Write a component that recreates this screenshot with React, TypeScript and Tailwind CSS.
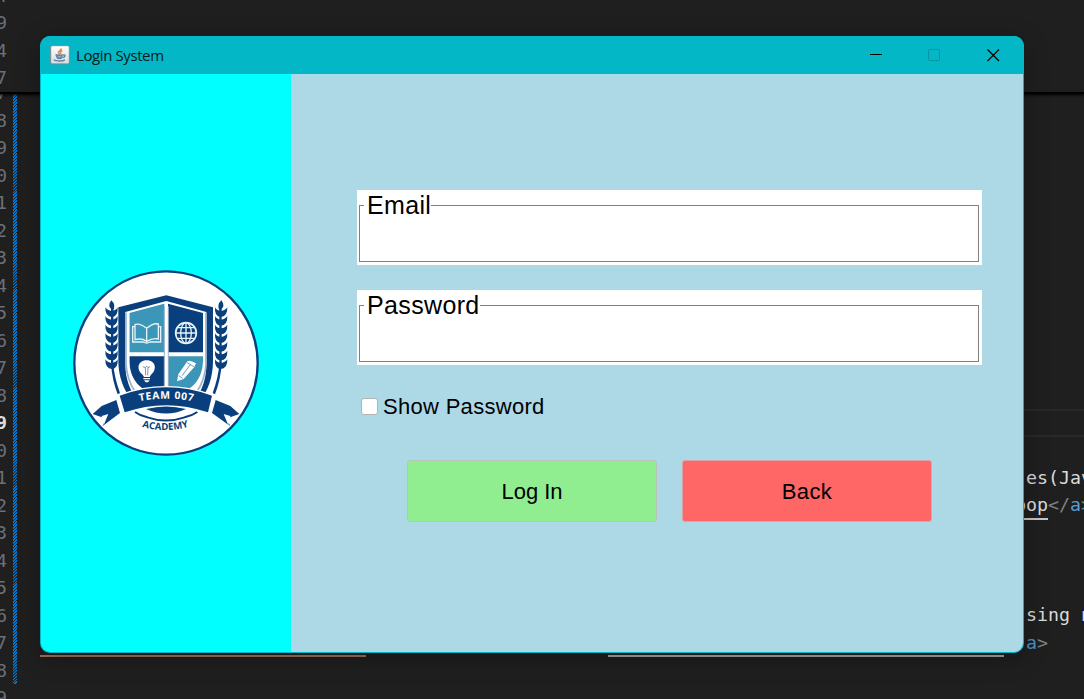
import React from "react";

const STICKY = ["4", "9", "4", "7"];
const LINES = ["7", "8", "9", "0", "1", "2", "3", "4", "5", "6", "7", "8", "9", "0", "1", "2", "3", "4", "5", "6", "7", "8", "9"];
const ACTIVE = 12;

function LineNumber({ value, active = false }: { value: string; active?: boolean }) {
  return (
    <div className={`flex h-[27.5px] w-[7px] shrink-0 items-center justify-end ${active ? "font-bold text-[#dcdcdc]" : "text-[#6b7079]"}`}>
      {value}
    </div>
  );
}

function CodeLines() {
  return (
    <div className="flex grow flex-col items-end overflow-hidden whitespace-pre text-[#dadada]">
      <div className="mt-[315px] h-[28px] w-[200px] shrink-0 border-y-2 border-[#292929]" />
      <div className="h-[26.5px] shrink-0" />
      <div className="h-[27.5px] w-[58px] shrink-0 leading-[27.5px]">es(Jav</div>
      <div className="flex h-[27.5px] w-[69px] shrink-0 leading-[28.5px]">
        <span className="h-[29px] border-b-2 border-[#c4c4c4]">pop</span>
        <span className="text-[#808080]">&lt;/</span>
        <span className="text-[#569cd6]">a</span>
        <span className="text-[#808080]">&gt;</span>
      </div>
      <div className="h-[82.5px] shrink-0" />
      <div className="h-[27.5px] w-[58px] shrink-0 leading-[28.5px]">sing n</div>
      <div className="h-[27.5px] w-[58px] shrink-0 leading-[27.5px]">
        <span className="text-[#4d8fcb]">a</span>
        <span className="text-[#808080]">&gt;</span>
      </div>
    </div>
  );
}

function Editor() {
  return (
    <div className="flex h-full flex-col bg-[#1f1f1f] font-['DejaVu_Sans_Mono',monospace] text-[18.3px] leading-none">
      <div className="z-10 flex h-[94px] shrink-0 flex-col justify-end border-b-2 border-black bg-[#1f1f1f] shadow-[0_1px_3px_#000]">
        {STICKY.map((n, i) => (
          <LineNumber key={i} value={n} />
        ))}
      </div>
      <div className="flex min-h-0 grow overflow-hidden">
        <div className="-mt-[14.6px] flex w-2 shrink-0 flex-col">
          {LINES.map((n, i) => (
            <LineNumber key={i} value={n} active={i === ACTIVE} />
          ))}
        </div>
        <div className="ml-[5px] h-[590px] w-1 shrink-0 bg-[repeating-linear-gradient(135deg,#0078d4_0px,#0078d4_1.2px,#1f2a35_1.4px,#1f2a35_2.1px)]" />
        <CodeLines />
      </div>
    </div>
  );
}

function JavaIcon() {
  return (
    <svg viewBox="0 0 20 20" className="size-5">
      <defs>
        <linearGradient id="tile" x1="0" y1="0" x2="0" y2="1">
          <stop offset="0" stopColor="#ffffff" />
          <stop offset="1" stopColor="#d9dbde" />
        </linearGradient>
      </defs>
      <rect x="0.7" y="0.7" width="18.6" height="18.2" rx="1.5" fill="url(#tile)" stroke="#7e8b93" strokeWidth="1" />
      <path d="M11 3.3C12 5 7.6 6 8.5 7.7L10 9.3M12.4 5.5C9.5 6.7 10.5 7.5 11 9" fill="none" stroke="#e98b45" strokeWidth="1.6" />
      <path d="M5.5 9.8Q9.5 10.8 13 9.8M6 11.5Q9.5 12.7 12.7 11.5M6.8 13.2Q9.5 14.1 12 13.2M13 10C16 9.2 15.5 12 12.7 12.6M4.5 14.5C3 16 12 16.7 15 14.8" fill="none" stroke="#5f86a6" strokeWidth="1.4" />
    </svg>
  );
}

const LEAVES = [138, 164, 190, 216, 242, 268, 294];

function Wheat() {
  return (
    <g>
      <path d="M136 108Q151 122 141 139Q121 126 136 108Z" />
      {LEAVES.map((y) => (
        <g key={y}>
          <path d={`M118 ${y - 9}Q124 ${y + 1} 137 ${y + 2}L138 ${y + 20}Q117 ${y + 19} 118 ${y - 9}Z`} />
          <path d={`M155 ${y - 9}Q150 ${y + 1} 138 ${y + 2}L138 ${y + 20}Q157 ${y + 19} 155 ${y - 9}Z`} />
        </g>
      ))}
      <path d="M135 130V300Q139 350 155 390L162 386Q145 340 142 300V130Z" />
    </g>
  );
}

function Crest() {
  return (
    <svg viewBox="0 -4 600 600" className="size-[200px]">
      <defs>
        <path id="teamArc" d="M190 418Q300 388 412 418" />
        <path id="academyArc" d="M205 481Q300 515 394 478" />
        <clipPath id="shieldInner">
          <path d="M190 146L300 117L411 146V285C411 340 385 385 300 400C215 385 190 340 190 285Z" />
        </clipPath>
      </defs>
      <circle cx="300" cy="296" r="275" fill="#fff" stroke="#093f7c" strokeWidth="7" />
      <g fill="#093f7c">
        <Wheat />
        <g transform="translate(602 0) scale(-1 1)">
          <Wheat />
        </g>
        <path d="M157 129L301 93L441 129V290C441 340 425 380 402 410H198C175 380 157 340 157 290Z" />
      </g>
      <path d="M178 143L301 110L421 143V300C421 345 408 375 390 405H210C192 375 178 345 178 300Z" fill="#fff" />
      <path d="M180 145V300Q183 345 207 382M420 145V300Q417 345 393 382" fill="none" stroke="#9cb4cb" strokeWidth="5" />
      <g clipPath="url(#shieldInner)">
        <path d="M185 110H295V264H185ZM306 276H415V400H306Z" fill="#3c96b8" />
        <path d="M306 110H415V264H306ZM185 276H295V400H185Z" fill="#093f7c" />
      </g>
      <path d="M295 126V375M307 126V375" stroke="#9cb4cb" strokeWidth="3" />
      <g fill="none" stroke="#e5f3f8" strokeWidth="4">
        <path d="M242 192Q220 175 207 181V226Q226 220 242 231Q260 220 277 224V179Q262 175 242 192V231M207 187H200V233H232Q242 239 252 233H284V187H277" />
        <circle cx="360" cy="206" r="31" strokeWidth="5" />
        <ellipse cx="360" cy="206" rx="16" ry="31" />
        <path d="M329 206H391M360 175V237M335 190H385M335 222H385" />
      </g>
      <path d="M230 331C211 318 213 288 242 288C271 288 273 318 255 331L251 338H234ZM232 341H252V345H232ZM234 348H251L246 354H239Z" fill="#fff" />
      <path d="M231 307L238 310L239 333M252 307L246 310L245 333M238 310L242 305L246 310" fill="none" stroke="#5f82a8" strokeWidth="2.5" />
      <path d="M333 351L337 330L364 291Q371 285 390 297L385 308L353 344Z" fill="#fff" />
      <path d="M348 334L373 301M363 295L384 307M338 334L350 342" stroke="#3c96b8" strokeWidth="2.5" />
      <path d="M161 394Q300 344 438 394L426 444Q300 401 176 444Z" fill="#093f7c" stroke="#fff" strokeWidth="8" paintOrder="stroke" />
      <path d="M151 407L162 446L110 485L116 462L80 449L107 425ZM449 407L438 446L492 485L484 462L520 449L493 425Z" fill="#093f7c" />
      <path d="M107 455L127 449L113 483M493 455L473 449L487 483" fill="#fff" />
      <path d="M240 434Q300 419 360 434Q300 461 240 434Z" fill="#093f7c" />
      <path d="M207 443Q222 454 244 459Q300 478 356 459Q378 454 394 443" fill="none" stroke="#093f7c" strokeWidth="6" />
      <text fill="#fff" className="font-['Open_Sans',sans-serif] text-[31px] font-bold" textAnchor="middle">
        <textPath href="#teamArc" startOffset="50%" textLength="162">TEAM 007</textPath>
      </text>
      <text fill="#093f7c" className="font-['Open_Sans',sans-serif] text-[29px] font-bold" textAnchor="middle">
        <textPath href="#academyArc" startOffset="49%" textLength="142">ACADEMY</textPath>
      </text>
    </svg>
  );
}

function TitleBar() {
  return (
    <header className="flex h-[38px] shrink-0 items-center bg-[#03b7c6] pl-[10px] pr-[24px]">
      <JavaIcon />
      <span className="ml-[6px] mt-[1px] grow font-['Open_Sans',sans-serif] text-[15px] tracking-[-0.4px] text-[#041c20]">Login System</span>
      <div className="flex text-black">
        <svg viewBox="0 0 13 13" className="mr-[45px] size-[13px]"><path d="M0 5.5H12" stroke="currentColor" /></svg>
        <svg viewBox="0 0 13 13" className="mr-[46px] size-[13px]"><rect x="0.5" y="0.5" width="11" height="11" rx="1" fill="none" stroke="#0595a1" /></svg>
        <svg viewBox="0 0 13 13" className="size-[13px]"><path d="M0.5 0.5L12 12M12 0.5L0.5 12" stroke="currentColor" strokeWidth="1.2" /></svg>
      </div>
    </header>
  );
}

function Field({ label, type }: { label: string; type: string }) {
  return (
    <div className="h-[75px] w-[625px] bg-white pl-[2px] pr-[3px]">
      <fieldset className="h-[72px] min-w-0 border border-[#808080] pl-1">
        <legend className="h-[31px] pl-[3px] text-[25px] leading-[31px] tracking-[0.35px]">{label}</legend>
        <input type={type} aria-label={label} className="block h-8 w-full bg-transparent text-[25px] outline-none" />
      </fieldset>
    </div>
  );
}

function LoginForm() {
  return (
    <main className="grow bg-[#add8e6] pl-[66px] pt-[116px] text-black">
      <div className="flex flex-col gap-[25px]">
        <Field label="Email" type="text" />
        <Field label="Password" type="password" />
      </div>
      <label className="mt-[27px] flex h-7 items-center pl-1 text-[22px] tracking-[0.3px]">
        <input type="checkbox" className="mr-[5px] size-[17px] appearance-none rounded-[3px] border border-[#b4b4b4] bg-white" />
        Show Password
      </label>
      <div className="ml-[50px] mt-[40px] flex gap-[25px] text-[22px]">
        <button className="h-[62px] w-[250px] rounded-[3px] border border-[#b9c5b9] bg-[#90ee90]">Log In</button>
        <button className="h-[62px] w-[250px] rounded-[3px] border border-[#d9a5aa] bg-[#ff6666] tracking-[0.4px]">Back</button>
      </div>
    </main>
  );
}

export default function App() {
  return (
    <div className="relative h-[699px] w-[1084px] overflow-hidden bg-[#1f1f1f] font-['Liberation_Sans',Arial,sans-serif]">
      <Editor />
      <div className="absolute left-[40px] top-[655px] h-[2px] w-[326px] bg-[#a1705c]" />
      <div className="absolute left-[608px] top-[655px] h-[2px] w-[396px] bg-[#a5a5a5]" />
      <div className="absolute left-[40px] top-[36px] z-20 flex h-[617px] w-[984px] flex-col overflow-hidden rounded-[10px] bg-[#03b7c6] shadow-[0_5px_25px_rgba(0,0,0,0.3)]">
        <TitleBar />
        <div className="mx-px mb-px flex min-h-0 grow overflow-hidden rounded-b-[9px]">
          <aside className="flex w-[250px] shrink-0 items-center justify-center bg-[#00ffff]">
            <Crest />
          </aside>
          <LoginForm />
        </div>
      </div>
    </div>
  );
}
